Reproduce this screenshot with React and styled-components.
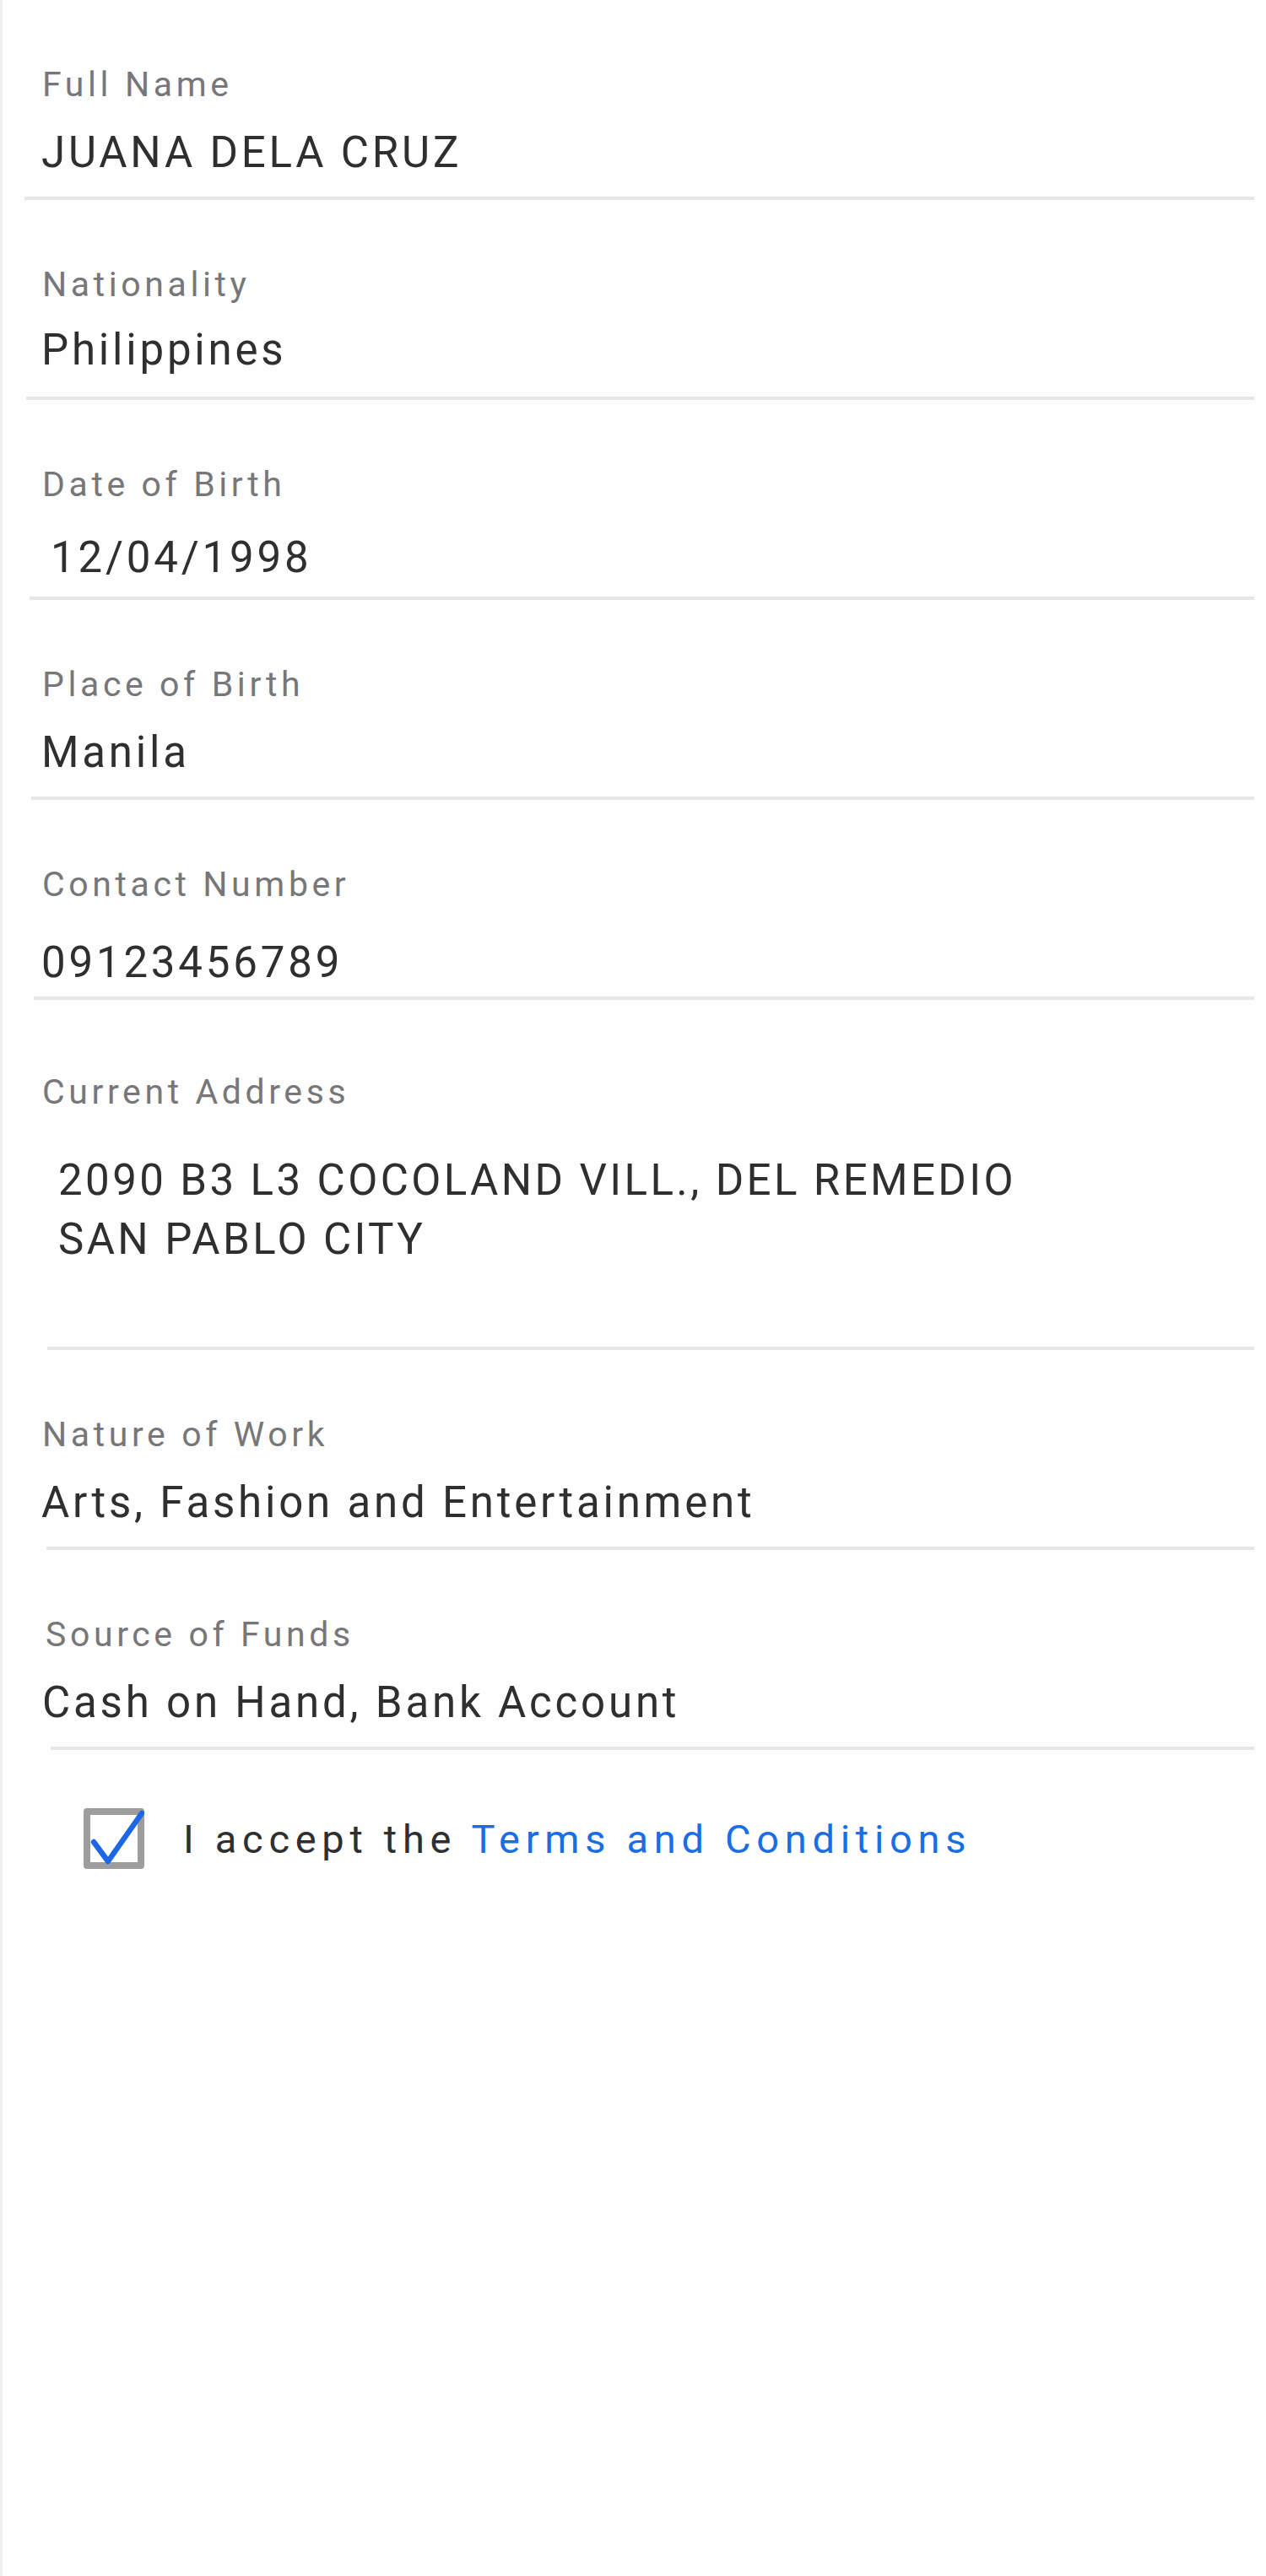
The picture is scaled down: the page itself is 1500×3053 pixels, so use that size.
import React from 'react'
import styled, { createGlobalStyle } from 'styled-components'

const GlobalStyle = createGlobalStyle`
    html, body {
        margin : 0;
        padding : 0;
        background : #fefefe;
    }
    body {
        font-family : Roboto, "Noto Sans", "Liberation Sans", sans-serif;
    }
`

const Page = styled.div`
    min-height : 100vh;
    box-sizing : border-box;
    border-left : 3px solid #efefef;
    background : #fefefe;
    display : flex;
    flex-direction : column;
`
const Field = styled.div`
    display : flex;
    flex-direction : column;
    padding-top : ${({ $tall }) => ($tall ? 85 : 76)}px;
`
const Label = styled.label`
    font-size : 41px;
    line-height : 48px;
    letter-spacing : 4.6px;
    color : #777779;
    padding-left : ${({ $indent }) => $indent}px;
`
const Value = styled.div`
    margin-top : ${({ $drop = 0 }) => 27 + $drop}px;
    font-size : 51px;
    line-height : 60px;
    letter-spacing : 3.8px;
    color : #2f2f31;
    padding-left : ${({ $indent }) => $indent}px;
`
const Address = styled(Value)`
    margin-top : 46px;
    line-height : 70px;
    letter-spacing : 3.4px;
    white-space : pre-line;
`
const Divider = styled.div`
    height : 4px;
    background : #e7e7e7;
    margin : ${({ $gap }) => $gap}px 14px 0 ${({ $inset }) => $inset}px;
`
const Terms = styled.div`
    display : flex;
    align-items : center;
    gap : 46px;
    margin-top : 69px;
    padding-left : 96px;
    font-size : 47px;
    letter-spacing : 6.7px;
    color : #2f2f31;
`
const Box = styled.span`
    position : relative;
    flex : none;
    width : 72px;
    height : 72px;
    box-sizing : border-box;
    border : 8px solid #9d9d9d;
    border-radius : 4px;
    background : #fff;
`
const Tick = styled.svg`
    position : absolute;
    left : -8px;
    top : -8px;
`
const Link = styled.span`
    color : #1a6ee3;
`

const fields = [
    { label : 'Full Name', value : 'JUANA DELA CRUZ', indent : 46, inset : 26, drop : 0 },
    { label : 'Nationality', value : 'Philippines', indent : 46, inset : 28, drop : -3 },
    { label : 'Date of Birth', value : '12/04/1998', indent : 57, inset : 32, drop : 6 },
    { label : 'Place of Birth', value : 'Manila', indent : 46, inset : 34, drop : 0 },
    { label : 'Contact Number', value : '09123456789', indent : 46, inset : 37, drop : 12 },
]

const rest = [
    { label : 'Nature of Work', value : 'Arts, Fashion and Entertainment', indent : 46, inset : 52, labelIndent : 47 },
    { label : 'Source of Funds', value : 'Cash on Hand, Bank Account', indent : 47, inset : 57, labelIndent : 51 },
]

const App = () => {
    return (
        <>
            <GlobalStyle />
            <Page>
                {fields.map((f) => (
                    <Field key={f.label}>
                        <Label $indent={47}>{f.label}</Label>
                        <Value $indent={f.indent} $drop={f.drop}>{f.value}</Value>
                        <Divider $gap={22 - f.drop} $inset={f.inset} />
                    </Field>
                ))}

                <Field $tall>
                    <Label $indent={47}>Current Address</Label>
                    <Address $indent={66}>{'2090 B3 L3 COCOLAND VILL., DEL REMEDIO\nSAN PABLO CITY'}</Address>
                    <Divider $gap={92} $inset={53} />
                </Field>

                {rest.map((f) => (
                    <Field key={f.label}>
                        <Label $indent={f.labelIndent}>{f.label}</Label>
                        <Value $indent={f.indent}>{f.value}</Value>
                        <Divider $gap={22} $inset={f.inset} />
                    </Field>
                ))}

                <Terms>
                    <Box>
                        <Tick width="72" height="72" viewBox="0 0 72 72">
                            <polyline points="12,40 29,63 69,6" fill="none" stroke="#1b67e6" strokeWidth="6.5" strokeLinecap="round" strokeLinejoin="round" />
                        </Tick>
                    </Box>
                    <span>I accept the <Link>Terms and Conditions</Link></span>
                </Terms>
            </Page>
        </>
    )
}

export default App
